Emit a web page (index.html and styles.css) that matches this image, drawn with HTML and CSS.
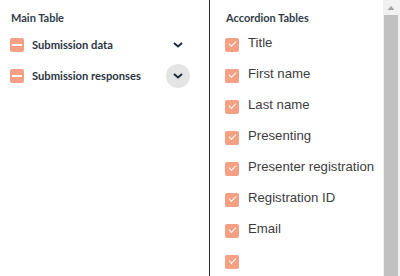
FILE: index.html
```html
<!DOCTYPE html>
<html lang="en">

<head>
  <meta charset="UTF-8">
  <meta name="viewport" content="width=device-width, initial-scale=1.0">
  <title>Table Picker</title>
  <link rel="stylesheet" href="styles.css">
</head>

<body>
  <div class="layout">
    <div class="main-tables">
      <h3>Main Table</h3>
      <div class="table-row">
        <span class="box indeterminate"></span>
        <span class="table-name">Submission data</span>
        <button class="toggle">
          <svg width="10" height="6" viewBox="0 0 10 6"><path d="M1 1l4 3.5L9 1" fill="none" stroke="#1f2a3c" stroke-width="2"/></svg>
        </button>
      </div>
      <div class="table-row">
        <span class="box indeterminate"></span>
        <span class="table-name">Submission responses</span>
        <button class="toggle active">
          <svg width="10" height="6" viewBox="0 0 10 6"><path d="M1 1l4 3.5L9 1" fill="none" stroke="#1f2a3c" stroke-width="2"/></svg>
        </button>
      </div>
    </div>

    <div class="accordion-tables">
      <h3>Accordion Tables</h3>
      <label class="field"><span class="box checked"></span>Title</label>
      <label class="field"><span class="box checked"></span>First name</label>
      <label class="field"><span class="box checked"></span>Last name</label>
      <label class="field"><span class="box checked"></span>Presenting</label>
      <label class="field"><span class="box checked"></span>Presenter registration</label>
      <label class="field"><span class="box checked"></span>Registration ID</label>
      <label class="field"><span class="box checked"></span>Email</label>
      <label class="field"><span class="box checked"></span></label>
    </div>

    <div class="scrollbar">
      <div class="scroll-up">
        <svg width="17" height="15" viewBox="0 0 17 15"><path d="M4.5 10h7L8 6z" fill="#a3a3a3"/></svg>
      </div>
      <div class="scroll-thumb"></div>
    </div>
  </div>
</body>

</html>
```

FILE: styles.css
```css
body {
  margin: 0;
  overflow: hidden;
  background-color: #fff;
}

.layout {
  display: flex;
  height: 276px;
}

h3 {
  margin: 0 0 3px;
  font-family: Lato, sans-serif;
  font-size: 11px;
  font-weight: bold;
  line-height: 16px;
  color: #323c4a;
}

/* Left column */
.main-tables {
  width: 210px;
  box-sizing: border-box;
  padding: 10px 0 0 11px;
  border-right: 1px solid #2b2b2b;
}

.main-tables .box {
  margin-left: -1px;
}

.table-row {
  display: flex;
  align-items: center;
  height: 31px;
}

.table-name {
  flex: 1;
  margin-left: 8px;
  font-family: Lato, sans-serif;
  font-size: 11.2px;
  font-weight: bold;
  color: #2d3443;
}

.toggle {
  width: 24px;
  height: 24px;
  margin-right: 19px;
  padding: 0;
  border: none;
  border-radius: 50%;
  background: transparent;
  display: flex;
  align-items: center;
  justify-content: center;
}

.toggle.active {
  background-color: #e4e4e4;
}

/* Checkboxes */
.box {
  width: 14px;
  height: 14px;
  flex-shrink: 0;
  border-radius: 2px;
  background-color: #f5a083;
  position: relative;
}

.box.indeterminate::after {
  content: "";
  position: absolute;
  left: 2px;
  right: 2px;
  top: 6px;
  height: 2px;
  background-color: #fff;
}

.box.checked::after {
  content: "";
  position: absolute;
  left: 4px;
  top: 3px;
  width: 6px;
  height: 3px;
  border-left: 1.5px solid #fff;
  border-bottom: 1.5px solid #fff;
  transform: rotate(-45deg);
  transform-origin: center;
}

/* Right column */
.accordion-tables {
  flex: 1;
  overflow: hidden;
  padding: 10px 0 0 16px;
}

.accordion-tables h3 {
  margin-bottom: 1px;
}

.accordion-tables .box {
  margin-left: -1px;
  margin-top: 4px;
}

.field {
  display: flex;
  align-items: center;
  gap: 9px;
  height: 31px;
  font-family: "Liberation Sans", Arial, sans-serif;
  font-size: 13.2px;
  color: #3d3d3d;
  white-space: nowrap;
}

/* Scrollbar */
.scrollbar {
  width: 17px;
  flex-shrink: 0;
  display: flex;
  flex-direction: column;
  background-color: #f1f1f1;
}

.scroll-up {
  height: 15px;
}

.scroll-up svg {
  display: block;
}

.scroll-thumb {
  flex: 1;
  margin: 0 2px 0 1px;
  background-color: #c1c1c1;
}
```
